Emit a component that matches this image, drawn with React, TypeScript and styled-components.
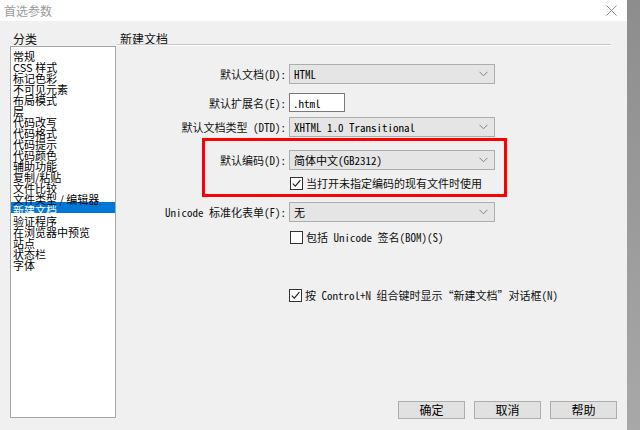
import styled, { createGlobalStyle } from "styled-components";

const ui = `"Noto Sans CJK SC", "Liberation Sans", sans-serif`;
const mono = `"Noto Sans Mono CJK SC", "Liberation Mono", "Noto Sans CJK SC", monospace`;

const GlobalStyle = createGlobalStyle`
  html, body {
    margin: 0;
    padding: 0;
  }
  body {
    width: 640px;
    height: 430px;
    overflow: hidden;
    font-family: ${ui};
  }
`;

const Screen = styled.div`
  display: flex;
  width: 640px;
  height: 430px;
`;

const Dialog = styled.div`
  width: 627px;
  display: flex;
  flex-direction: column;
  background: #f0f0f0;
`;

const Shade = styled.div`
  flex: 1;
  background: linear-gradient(#8d8d8d, #a8a8a8);
`;

const TitleBar = styled.div`
  height: 21px;
  flex-shrink: 0;
  background: #fff;
  display: flex;
  align-items: center;
  justify-content: space-between;
  padding: 0 10px 0 4px;
  box-sizing: border-box;
  font: 12px ${ui};
  color: #9a9a9a;
`;

const Body = styled.div`
  flex: 1;
  display: flex;
  padding: 9px 10px 11px 10px;
  box-sizing: border-box;
  min-height: 0;
`;

const Sidebar = styled.div`
  width: 106px;
  display: flex;
  flex-direction: column;
  margin-bottom: 1px;
`;

const Caption = styled.div`
  height: 14px;
  line-height: 14px;
  padding-left: 3px;
  font: 12px ${ui};
  color: #111;
`;

const CategoryList = styled.div`
  flex: 1;
  margin-top: 2px;
  padding-top: 1px;
  background: #fff;
  border: 1px solid #a5a5a5;
  overflow: hidden;
`;

const CategoryItem = styled.div<{ $selected?: boolean }>`
  height: 11px;
  line-height: 11px;
  padding-left: 2px;
  font: 11px ${ui};
  white-space: nowrap;
  color: ${(p) => (p.$selected ? "#fff" : "#000")};
  background: ${(p) => (p.$selected ? "#0078d7" : "transparent")};
`;

const Main = styled.div`
  flex: 1;
  margin-left: 1px;
  display: flex;
  flex-direction: column;
`;

const Separator = styled.div`
  margin-right: 6px;
  border-top: 1px solid #c8c8c8;
  border-bottom: 1px solid #fff;
`;

const Form = styled.div`
  position: relative;
  margin-top: 18px;
  display: flex;
  flex-direction: column;
`;

const Row = styled.div<{ $gap: number; $h: number }>`
  display: flex;
  align-items: center;
  margin-top: ${(p) => p.$gap}px;
  height: ${(p) => p.$h}px;
`;

const Label = styled.div`
  width: 172px;
  padding-right: 3px;
  box-sizing: border-box;
  text-align: right;
  font: 11px ${mono};
  color: #111;
  white-space: nowrap;
`;

const Select = styled.div`
  width: 206px;
  height: 20px;
  box-sizing: border-box;
  display: flex;
  align-items: center;
  justify-content: space-between;
  padding: 0 6px 0 4px;
  background: #e5e5e5;
  border: 1px solid #adadad;
  font: 11px ${mono};
  color: #000;
`;

const TextInput = styled.div`
  width: 56px;
  height: 19px;
  box-sizing: border-box;
  display: flex;
  align-items: center;
  padding-left: 3px;
  background: #fff;
  border: 1px solid #7a7a7a;
  font: 11px ${mono};
  color: #000;
`;

const Check = styled.label<{ $indent: number }>`
  display: flex;
  align-items: center;
  margin-left: ${(p) => p.$indent}px;
  font: 11px ${mono};
  color: #111;
  white-space: nowrap;
`;

const Box = styled.span`
  width: 13px;
  height: 13px;
  box-sizing: border-box;
  border: 1px solid #333;
  background: #fff;
  margin-right: 3px;
  display: flex;
  align-items: center;
  justify-content: center;
`;

const Highlight = styled.div`
  position: absolute;
  left: 85px;
  top: 74px;
  width: 305px;
  height: 59px;
  box-sizing: border-box;
  border: 3px solid #f00;
  pointer-events: none;
`;

const Buttons = styled.div`
  margin-top: auto;
  display: flex;
  justify-content: flex-end;
  gap: 9px;
`;

const Button = styled.button`
  width: 67px;
  height: 18px;
  padding: 0;
  background: #e1e1e1;
  border: 1px solid #adadad;
  font: 12px ${ui};
  line-height: 16px;
  color: #000;
`;

const categories = [
  "常规",
  "CSS 样式",
  "标记色彩",
  "不可见元素",
  "布局模式",
  "层",
  "代码改写",
  "代码格式",
  "代码提示",
  "代码颜色",
  "辅助功能",
  "复制/粘贴",
  "文件比较",
  "文件类型 / 编辑器",
  "新建文档",
  "验证程序",
  "在浏览器中预览",
  "站点",
  "状态栏",
  "字体",
];

function Chevron() {
  return (
    <svg width="9" height="6" viewBox="0 0 9 6">
      <path d="M0.5 0.8 L4.5 4.8 L8.5 0.8" fill="none" stroke="#808080" strokeWidth="1" />
    </svg>
  );
}

function CheckBox({ checked }: { checked?: boolean }) {
  return (
    <Box>
      {checked ? (
        <svg width="11" height="11" viewBox="0 0 11 11">
          <path d="M1.8 5.6 L4.3 8.2 L9.4 2.2" fill="none" stroke="#222" strokeWidth="1.2" />
        </svg>
      ) : null}
    </Box>
  );
}

function Dropdown({ value }: { value: string }) {
  return (
    <Select>
      <span>{value}</span>
      <Chevron />
    </Select>
  );
}

function App() {
  return (
    <>
      <GlobalStyle />
      <Screen>
        <Dialog>
          <TitleBar>
            <span>首选参数</span>
            <svg width="11" height="11" viewBox="0 0 11 11">
              <path d="M0.5 0.5 L10.5 10.5 M10.5 0.5 L0.5 10.5" stroke="#8a8a8a" strokeWidth="1" />
            </svg>
          </TitleBar>
          <Body>
            <Sidebar>
              <Caption>分类</Caption>
              <CategoryList>
                {categories.map((c) => (
                  <CategoryItem key={c} $selected={c === "新建文档"}>
                    {c}
                  </CategoryItem>
                ))}
              </CategoryList>
            </Sidebar>
            <Main>
              <Caption>新建文档</Caption>
              <Separator />
              <Form>
                <Row $gap={0} $h={20}>
                  <Label>默认文档(D):</Label>
                  <Dropdown value="HTML" />
                </Row>
                <Row $gap={9} $h={19}>
                  <Label>默认扩展名(E):</Label>
                  <TextInput>.html</TextInput>
                </Row>
                <Row $gap={5} $h={20}>
                  <Label>默认文档类型 (DTD):</Label>
                  <Dropdown value="XHTML 1.0 Transitional" />
                </Row>
                <Row $gap={13} $h={20}>
                  <Label>默认编码(D):</Label>
                  <Dropdown value="简体中文(GB2312)" />
                </Row>
                <Row $gap={6} $h={14}>
                  <Check $indent={173}>
                    <CheckBox checked />
                    当打开未指定编码的现有文件时使用
                  </Check>
                </Row>
                <Row $gap={12} $h={20}>
                  <Label>Unicode 标准化表单(F):</Label>
                  <Dropdown value="无" />
                </Row>
                <Row $gap={8} $h={14}>
                  <Check $indent={173}>
                    <CheckBox />
                    包括 Unicode 签名(BOM)(S)
                  </Check>
                </Row>
                <Row $gap={44} $h={14}>
                  <Check $indent={172}>
                    <CheckBox checked />
                    按 Control+N 组合键时显示“新建文档”对话框(N)
                  </Check>
                </Row>
                <Highlight />
              </Form>
              <Buttons>
                <Button>确定</Button>
                <Button>取消</Button>
                <Button>帮助</Button>
              </Buttons>
            </Main>
          </Body>
        </Dialog>
        <Shade />
      </Screen>
    </>
  );
}

export default App;
